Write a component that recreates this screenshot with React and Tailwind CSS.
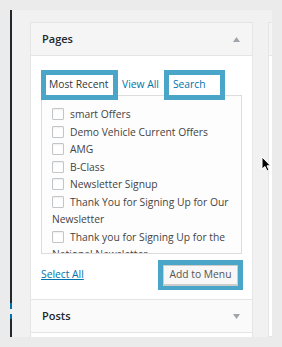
import { useState } from 'react';

const pages = [
  'smart Offers',
  'Demo Vehicle Current Offers',
  'AMG',
  'B-Class',
  'Newsletter Signup',
  'Thank You for Signing Up for Our Newsletter',
  'Thank you for Signing Up for the National Newsletter',
];

function Caret({ up }) {
  return (
    <svg width="7" height="5" viewBox="0 0 7 5" className="mr-[12px]">
      <path d={up ? 'M0 5 L3.5 0 L7 5 Z' : 'M0 0 L7 0 L3.5 5 Z'} fill="#a0a5aa" />
    </svg>
  );
}

export default function App() {
  const [checked, setChecked] = useState({});

  return (
    <div
      className="relative w-[282px] h-[347px] overflow-hidden bg-[#ebebeb] pt-[10px] px-[10px]"
      style={{ fontFamily: '"Open Sans", "Noto Sans", sans-serif' }}
    >
      <div className="flex h-[327px]">
        {/* admin menu edge, with the active item peeking out */}
        <div className="w-[2px] shrink-0 bg-[#23282d]">
          <div className="mt-[293px] flex h-[16px] w-[3px] items-center bg-[#0073aa]">
            <div className="h-[5px] w-[2px] bg-[#f1f1f1]" />
          </div>
        </div>

        <div className="flex flex-1 overflow-hidden bg-[#f1f1f1] pt-[12px] pl-[18px]">
          <div className="w-[223px] shrink-0 border border-[#e5e5e5] bg-white">
            <div className="flex h-[33px] items-center justify-between border-b border-[#e5e5e5] bg-[#f5f5f5] pl-[11px]">
              <span className="text-[11px] font-semibold text-[#23282d]">Pages</span>
              <Caret up />
            </div>

            <div className="px-[10px] pt-[14px] pb-[9px]">
              <div className="relative z-10 flex h-[30px] items-center text-[10.3px]">
                <div className="flex h-[30px] w-[77px] items-center border-[5px] border-[#49a6c8] bg-white pl-[3px] text-[#32373c]">
                  Most Recent
                </div>
                <span className="ml-[4px] text-[#0073aa]">View All</span>
                <div className="ml-[5px] flex h-[30px] w-[61px] items-center border-[5px] border-[#49a6c8] bg-white pl-[4px] text-[#0073aa]">
                  Search
                </div>
              </div>

              <div className="-mt-[5px] h-[159px] w-[201px] overflow-hidden border border-[#dddddd] bg-[#fdfdfd] pt-[10px] pl-[10px] pr-[10px]">
                {pages.map((p, i) => (
                  <label key={i} className="block text-[10.3px] leading-[17.5px] text-[#444]">
                    <span
                      onClick={() => setChecked({ ...checked, [i]: !checked[i] })}
                      className="mr-[6px] inline-block h-[12px] w-[12px] rounded-[1px] border border-[#c3c6c9] bg-white align-[-2px] shadow-[inset_0_1px_2px_rgba(0,0,0,0.07)]"
                    />
                    {p}
                  </label>
                ))}
              </div>

              <div className="mt-[6px] -mr-px flex h-[30px] items-center justify-between">
                <span className="text-[10.3px] text-[#0073aa] underline">Select All</span>
                <div className="flex h-[30px] w-[85px] items-center justify-center border-[5px] border-[#49a6c8]">
                  <div className="flex h-[20px] w-[75px] items-center justify-center border border-[#cccccc] bg-[#f7f7f7] text-[10.3px] text-[#555] shadow-[0_1px_0_#cccccc]">
                    Add to Menu
                  </div>
                </div>
              </div>
            </div>

            <div className="flex h-[33px] items-center justify-between border-t border-[#e5e5e5] bg-[#fafafa] pl-[11px]">
              <span className="text-[11px] font-semibold text-[#23282d]">Posts</span>
              <Caret />
            </div>
            <div className="h-[20px] border-t border-[#e5e5e5] bg-white" />
          </div>

          <div className="ml-[15px] w-[60px] shrink-0 border border-[#e5e5e5] bg-white">
            <div className="h-[33px] border-b border-[#e5e5e5] bg-[#f5f5f5]" />
          </div>
        </div>
      </div>

      {/* mouse pointer */}
      <svg className="absolute left-[261px] top-[156px]" width="11" height="17" viewBox="0 0 11 17">
        <path d="M1 1 L1 13 L4 10.5 L6 15 L8 14 L6 9.8 L9.5 9.8 Z" fill="#000" stroke="#fff" strokeWidth="1" strokeLinejoin="round" />
      </svg>
    </div>
  );
}
